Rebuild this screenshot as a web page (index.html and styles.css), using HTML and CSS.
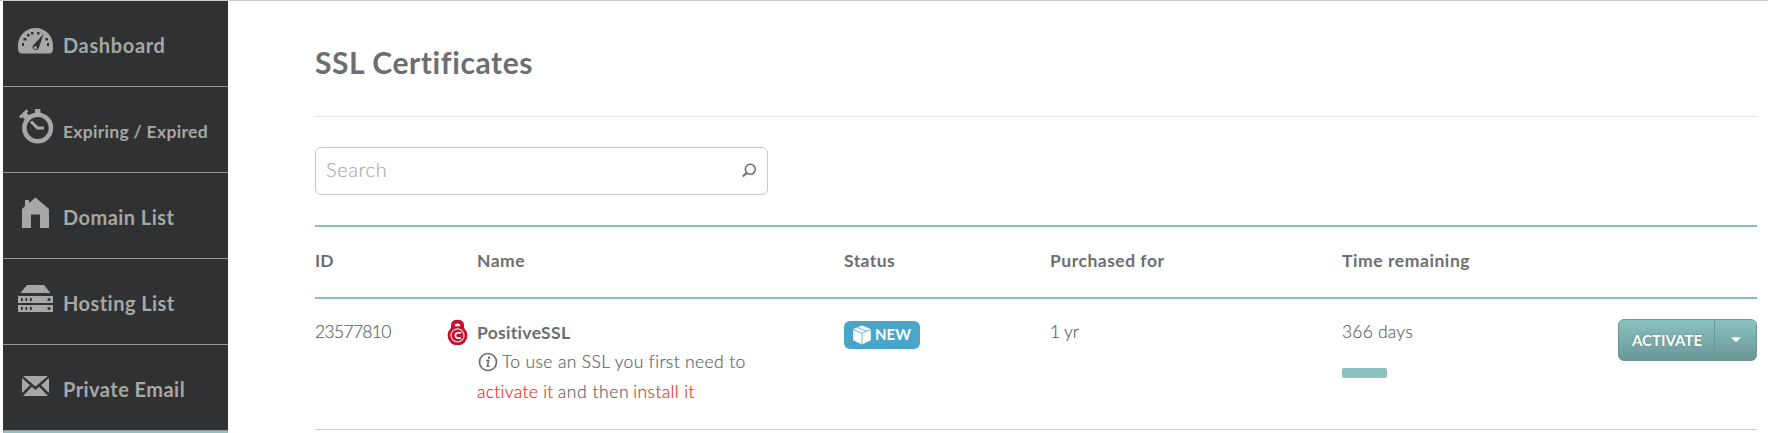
FILE: index.html
```html
<!DOCTYPE html>
<html lang="en">
<head>
<meta charset="utf-8">
<title>SSL Certificates</title>
<link rel="stylesheet" href="styles.css">
</head>
<body>
<div class="page">
  <nav class="sidebar">
    <a class="nav-item">
      <svg class="nav-icon i-dash" width="36" height="36" viewBox="0 0 36 36"><path fill="currentColor" d="M1 18.500C1 9 8.500 1 18.500 1S36 9 36 18.500V22Q36 26.500 31.500 26.500H5.500Q1 26.500 1 22Z"/><g fill="#303132"><rect x="5" y="16" width="2" height="3"/><rect x="30" y="16" width="2" height="3"/><rect x="6.500" y="11" width="3" height="2.500"/><rect x="28.500" y="11" width="2.500" height="2.500"/><rect x="10" y="7" width="2.500" height="2.500"/><rect x="14" y="5" width="2.500" height="2.500"/><rect x="20" y="5" width="2.500" height="2.500"/><path d="M26.500 7 21.800 21Q20.500 23.500 17.500 23 14.500 21 16 18.500Z"/></g><circle cx="18.300" cy="20.700" r="1.600" fill="currentColor"/></svg>
      <span class="nav-text t-dash">Dashboard</span>
    </a>
    <a class="nav-item">
      <svg class="nav-icon i-exp" width="36" height="36" viewBox="0 0 36 36"><g fill="none" stroke="currentColor"><circle cx="20.700" cy="19" r="13.300" stroke-width="4.600"/><path d="M14 12.500 20.500 19H27" stroke-width="3"/><path d="M3 8.500 10.500 1.200" stroke-width="3"/><path d="M6.500 5 12 10.500" stroke-width="6"/><path d="M20.700 0V5" stroke-width="5.500"/></g></svg>
      <span class="nav-text t-exp">Expiring / Expired</span>
    </a>
    <a class="nav-item">
      <svg class="nav-icon i-dom" width="36" height="36" viewBox="0 0 36 36"><path fill="currentColor" d="M5 31V12L8 9V3H12V6L18.500 0.500 32 12V31H23V17.500H14V31Z"/></svg>
      <span class="nav-text t-dom">Domain List</span>
    </a>
    <a class="nav-item">
      <svg class="nav-icon i-host" width="36" height="36" viewBox="0 0 36 36"><path fill="currentColor" d="M10 2H27L33.500 10H3.500Z"/><path fill="currentColor" d="M1 13H36V20H1ZM1 22H36V29H1Z"/><g fill="#303132"><path d="M4 15H5.700V18H4ZM8.500 15H10.200V18H8.500ZM13 15H14.700V18H13ZM4 24H5.700V27H4ZM8.500 24H10.200V27H8.500ZM13 24H14.700V27H13Z"/><circle cx="32" cy="16.500" r="1.600"/><circle cx="32" cy="25.500" r="1.600"/></g></svg>
      <span class="nav-text t-host">Hosting List</span>
    </a>
    <a class="nav-item">
      <svg class="nav-icon i-mail" width="36" height="36" viewBox="0 0 36 36"><path fill="currentColor" d="M6 5H31L18.500 15.500ZM5 7 13 14.300 5 22ZM32 7V22L24 14.300ZM6 25 14.800 15.800 18.500 19 22.200 15.800 31 25Z"/></svg>
      <span class="nav-text t-mail">Private Email</span>
    </a>
    <div class="nav-accent"></div>
  </nav>
  <main class="main">
    <h1 class="title"><span class="t-title">SSL Certificates</span></h1>
    <div class="search">
      <span class="search-text">Search</span>
      <svg width="16" height="16" viewBox="0 0 16 16" fill="none" stroke="#6d6e70"><circle cx="9.300" cy="6.300" r="5" stroke-width="1.600"/><path d="M5.700 9.800 1.800 13.500" stroke-width="2"/></svg>
    </div>
    <div class="grid head">
      <span class="t-id">ID</span>
      <span class="name-col t-name">Name</span>
      <span class="t-status">Status</span>
      <span class="t-purch">Purchased for</span>
      <span class="t-time">Time remaining</span>
      <span></span>
    </div>
    <div class="grid row">
      <div class="cell t-num">23577810</div>
      <div class="name-cell">
        <svg class="lock" width="22" height="28" viewBox="0 0 22 28"><path d="M5.900 12V8.200Q5.900 4.600 10.500 4.600T15.100 8.200V12" fill="none" stroke="#c8102e" stroke-width="3.800"/><circle cx="10.500" cy="18.400" r="9.900" fill="#c8102e"/><circle cx="10.500" cy="18.400" r="6.500" fill="none" stroke="#fff" stroke-width="1.200" opacity=".85"/><path d="M14.300 15.800H11.500Q8.400 15.800 8.400 18.400T11.500 21.100H14" fill="none" stroke="#fff" stroke-width="1.600"/><path d="M8 8.300H13" stroke="#fff" stroke-width="2"/></svg>
        <div class="name-body">
          <div class="product"><span class="t-product">PositiveSSL</span></div>
          <div class="note"><svg class="info" width="20" height="20" viewBox="0 0 20 20"><circle cx="10" cy="10" r="8.500" fill="none" stroke="#6d6e70" stroke-width="1.700"/><path d="M8 8.500H10.700L9.300 14.300H11.500" fill="none" stroke="#6d6e70" stroke-width="1.600"/><circle cx="11" cy="5.700" r="1.200" fill="#6d6e70"/></svg><span class="t-note">To use an SSL you first need to</span></div>
          <div class="note"><a class="link t-act">activate it</a><span class="t-and">and then</span><a class="link t-inst">install it</a></div>
        </div>
      </div>
      <div class="status-cell">
        <span class="badge"><svg width="18" height="20" viewBox="0 0 18 20"><path d="M9 .5 17.800 4V15.200L9 19.500.2 15.200V4Z" fill="#fff"/><path d="M.2 4.500 9 8.200 17.800 4.500M9 8.200V19.500M4.500 2.500 13.500 6.200" fill="none" stroke="#4aa5cb" stroke-width=".8"/></svg><span class="t-new">NEW</span></span>
      </div>
      <div class="cell t-yr">1 yr</div>
      <div class="cell time-cell"><span class="t-days">366 days</span><span class="bar"></span></div>
      <div class="button">
        <span class="button-main"><span class="t-btn">ACTIVATE</span></span>
        <span class="button-drop"><svg width="10" height="6" viewBox="0 0 10 6"><path d="M0 .3H10L5 5.300Z" fill="#fff"/></svg></span>
      </div>
    </div>
  </main>
</div>
</body>
</html>
```
FILE: styles.css
```css
* { box-sizing: border-box; }
body { margin: 0; background: #fff; color: #6d6e70; font-family: Lato, "Liberation Sans", sans-serif; font-size: 18px; }
.page { display: flex; height: 433px; border-top: 1px solid #ccc; padding-left: 3px; overflow: hidden; white-space: nowrap; }
.sidebar { width: 225px; background: #303132; color: #a7a7a5; }
.nav-item { display: flex; height: 86px; padding: 27px 0 0 14px; border-bottom: 1px solid #989898; }
.nav-icon { flex: none; }
.i-dash { margin-top: -1px; }
.i-exp { margin-top: -5px; }
.i-dom { margin-top: -3px; }
.i-host { margin-top: -3px; }
.i-mail { margin-top: -1px; }
.nav-text { margin: 5px 0 0 10px; font-size: 20px; font-weight: 700; line-height: 25px; letter-spacing: .45px; }
.nav-text.t-dash { letter-spacing: .65px; }
.nav-text.t-exp { font-size: 17.5px; letter-spacing: .3px; }
.nav-accent { height: 2px; background: #8bc1c1; }
.main { width: 1442px; margin-left: 87px; }
.title { margin: 0; height: 116px; padding-top: 41px; border-bottom: 1px solid #e3e3e3; font-size: 30px; line-height: 40px; font-weight: 700; letter-spacing: .6px; }
.search { display: flex; align-items: center; justify-content: space-between; width: 453px; height: 48px; margin-top: 30px; padding: 0 10px; border: 1px solid #c8c8c8; border-radius: 6px; }
.search-text { padding-bottom: 4px; font-size: 20px; font-weight: 300; letter-spacing: .6px; color: #acacac; -webkit-text-stroke: .2px; }
.grid { display: grid; grid-template-columns: 132px 397px 207px 291px 276px 139px; }
.head { height: 74px; margin-top: 30px; padding-top: 23px; border: solid #8bc1c1; border-width: 2px 0; font-size: 17.5px; line-height: 22px; font-weight: 700; letter-spacing: .45px; }
.t-id { letter-spacing: 0; }
.name-col { padding-left: 30px; }
.t-purch { margin-left: -1px; letter-spacing: .5px; }
.t-time { letter-spacing: .57px; }
.row { height: 131px; border-bottom: 1px solid #d2d2d2; }
.cell { padding-top: 20px; color: #626366; font-weight: 300; font-size: 17.5px; line-height: 26px; -webkit-text-stroke: .2px; }
.t-num { letter-spacing: -.68px; }
.t-yr { margin-left: -1px; letter-spacing: -.2px; }
.t-days { letter-spacing: .2px; }
.name-cell { display: flex; padding-top: 18px; }
.lock { flex: none; margin-right: 8px; }
.product { font-size: 17.5px; font-weight: 700; line-height: 32px; letter-spacing: .3px; }
.note { display: flex; align-items: center; gap: 4px; height: 30px; margin-top: -2px; color: #626366; font-size: 17.5px; font-weight: 300; line-height: 30px; letter-spacing: .3px; -webkit-text-stroke: .2px; }
.note + .note { margin-top: 0; }
.info { margin-left: 1px; }
.t-note { letter-spacing: .36px; }
.t-and { letter-spacing: .6px; }
.t-inst { letter-spacing: .38px; }
.link { color: #e03020; }
.status-cell { padding-top: 22px; }
.badge { display: flex; align-items: center; gap: 4px; width: 76px; height: 28px; padding-left: 9px; border-radius: 6px; background: #4aa5cb; color: #fff; font-size: 15px; font-weight: 700; letter-spacing: 0; }
.t-new { padding-bottom: 2px; }
.time-cell { display: flex; flex-direction: column; }
.bar { width: 45px; height: 10px; margin-top: 23px; border-radius: 2px; background: #8bc1c1; }
.button { display: flex; width: 139px; height: 42px; margin-top: 20px; border: 1px solid #6a9797; border-radius: 6px; background: linear-gradient(#8bc1c1, #6b9696); color: #fff; font-size: 15px; font-weight: 700; }
.button-main { display: flex; align-items: center; width: 96px; padding: 0 0 1px 13px; border-right: 1px solid #6a9797; text-shadow: 0 0 2px rgba(0,0,0,.25); }
.button-drop { display: flex; flex: 1; align-items: center; justify-content: center; }
```
